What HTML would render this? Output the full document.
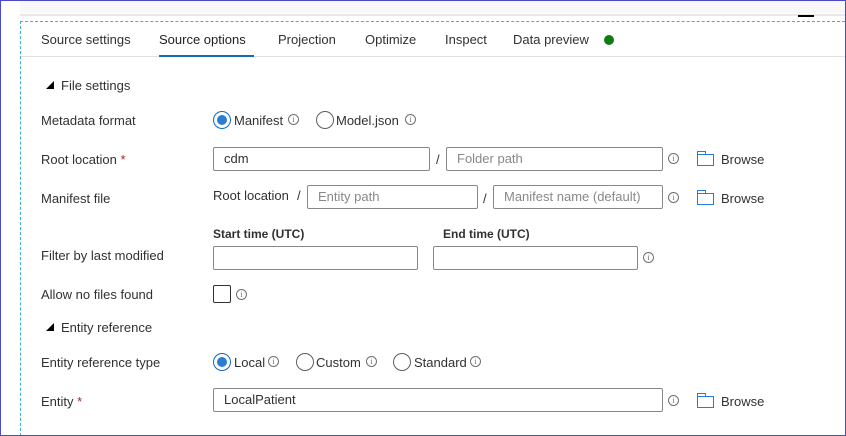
<!DOCTYPE html>
<html><head><meta charset="utf-8"><style>
*{margin:0;padding:0;box-sizing:border-box}
body{width:846px;height:436px;position:relative;overflow:hidden;background:#fff;font-family:"Liberation Sans",sans-serif;font-size:13px;color:#323130}
.a{position:absolute;white-space:nowrap}
.t{font-size:13px;color:#323130}
.in{position:absolute;height:24px;border:1px solid #8a8886;border-radius:2px;padding:0 10px;line-height:22px;font-size:13px;color:#323130}
.ph{color:#8a8886}
.i{position:absolute;width:11px;height:11px;border:1px solid #707070;border-radius:50%;font-size:8px;line-height:9px;text-align:center;color:#707070;font-family:"Liberation Serif",serif}
.r{position:absolute;width:18px;height:18px;border:1px solid #605e5c;border-radius:50%}
.r.on{border-color:#0f6cbd}
.r.on:after{content:"";position:absolute;left:3px;top:3px;width:10px;height:10px;border-radius:50%;background:#2b7cd3}
.f{position:absolute;width:17px;height:12px;border:1.2px solid #2b7cd3}
.f:before{content:"";position:absolute;left:-1px;top:-4px;width:7px;height:3px;border:1.2px solid #2b7cd3;border-bottom:none}
.tri{position:absolute;width:0;height:0;border-left:8px solid transparent;border-bottom:8px solid #000}
.req{color:#a4262c}
</style></head><body>
<div class="a" style="left:0;top:0;width:846px;height:436px;border:1px solid #4a4ac8;z-index:5;pointer-events:none"></div>
<div class="a" style="left:20px;top:1px;width:825px;height:12px;background:#f8f8f8"></div>
<div class="a" style="left:20px;top:14px;width:825px;height:2px;background:#e8e8e8"></div>
<div class="a" style="left:798px;top:15px;width:16px;height:2px;background:#000"></div>
<div class="a" style="left:20px;top:21px;width:825px;border-top:1px dashed #3ab0e0"></div>
<div class="a" style="left:20px;top:21px;height:415px;border-left:1px dashed #3ab0e0"></div>

<div class="a t" style="left:41px;top:32px">Source settings</div>
<div class="a t" style="left:159px;top:32px;color:#201f1e">Source options</div>
<div class="a t" style="left:278px;top:32px">Projection</div>
<div class="a t" style="left:365px;top:32px">Optimize</div>
<div class="a t" style="left:445px;top:32px">Inspect</div>
<div class="a t" style="left:513px;top:32px">Data preview</div>
<div class="a" style="left:604px;top:35px;width:10px;height:10px;border-radius:50%;background:#107c10"></div>
<div class="a" style="left:21px;top:56px;width:824px;height:1px;background:#e0e0e0"></div>
<div class="a" style="left:159px;top:55px;width:95px;height:2px;background:#0f6cbd"></div>

<div class="tri" style="left:46px;top:81px"></div>
<div class="a t" style="left:61px;top:78px">File settings</div>

<div class="a t" style="left:41px;top:113px">Metadata format</div>
<div class="r on" style="left:213px;top:111px"></div>
<div class="a t" style="left:234px;top:113px">Manifest</div>
<div class="i" style="left:288px;top:114px">i</div>
<div class="r" style="left:316px;top:111px"></div>
<div class="a t" style="left:336px;top:113px">Model.json</div>
<div class="i" style="left:405px;top:114px">i</div>

<div class="a t" style="left:41px;top:152px">Root location <span class="req">*</span></div>
<div class="in" style="left:213px;top:147px;width:217px">cdm</div>
<div class="a t" style="left:436px;top:152px">/</div>
<div class="in ph" style="left:446px;top:147px;width:217px">Folder path</div>
<div class="i" style="left:668px;top:153px">i</div>
<div class="f" style="left:697px;top:154px"></div>
<div class="a t" style="left:721px;top:152px">Browse</div>

<div class="a t" style="left:41px;top:191px">Manifest file</div>
<div class="a t" style="left:213px;top:188px">Root location</div>
<div class="a t" style="left:297px;top:188px">/</div>
<div class="in ph" style="left:307px;top:185px;width:171px">Entity path</div>
<div class="a t" style="left:483px;top:191px">/</div>
<div class="in ph" style="left:493px;top:185px;width:170px">Manifest name (default)</div>
<div class="i" style="left:668px;top:192px">i</div>
<div class="f" style="left:697px;top:193px"></div>
<div class="a t" style="left:721px;top:191px">Browse</div>

<div class="a" style="left:213px;top:227px;font-size:12px;font-weight:bold;color:#323130">Start time (UTC)</div>
<div class="a" style="left:443px;top:227px;font-size:12px;font-weight:bold;color:#323130">End time (UTC)</div>
<div class="a t" style="left:41px;top:248px">Filter by last modified</div>
<div class="in" style="left:213px;top:246px;width:205px"></div>
<div class="in" style="left:433px;top:246px;width:205px"></div>
<div class="i" style="left:643px;top:252px">i</div>

<div class="a t" style="left:41px;top:287px">Allow no files found</div>
<div class="a" style="left:213px;top:285px;width:18px;height:18px;border:1px solid #323130;border-radius:2px"></div>
<div class="i" style="left:236px;top:289px">i</div>

<div class="tri" style="left:46px;top:323px"></div>
<div class="a t" style="left:61px;top:320px">Entity reference</div>

<div class="a t" style="left:41px;top:355px">Entity reference type</div>
<div class="r on" style="left:213px;top:353px"></div>
<div class="a t" style="left:234px;top:355px">Local</div>
<div class="i" style="left:268px;top:356px">i</div>
<div class="r" style="left:296px;top:353px"></div>
<div class="a t" style="left:316px;top:355px">Custom</div>
<div class="i" style="left:366px;top:356px">i</div>
<div class="r" style="left:393px;top:353px"></div>
<div class="a t" style="left:414px;top:355px">Standard</div>
<div class="i" style="left:470px;top:356px">i</div>

<div class="a t" style="left:41px;top:394px">Entity <span class="req">*</span></div>
<div class="in" style="left:213px;top:388px;width:450px">LocalPatient</div>
<div class="i" style="left:668px;top:395px">i</div>
<div class="f" style="left:697px;top:396px"></div>
<div class="a t" style="left:721px;top:394px">Browse</div>
</body></html>
